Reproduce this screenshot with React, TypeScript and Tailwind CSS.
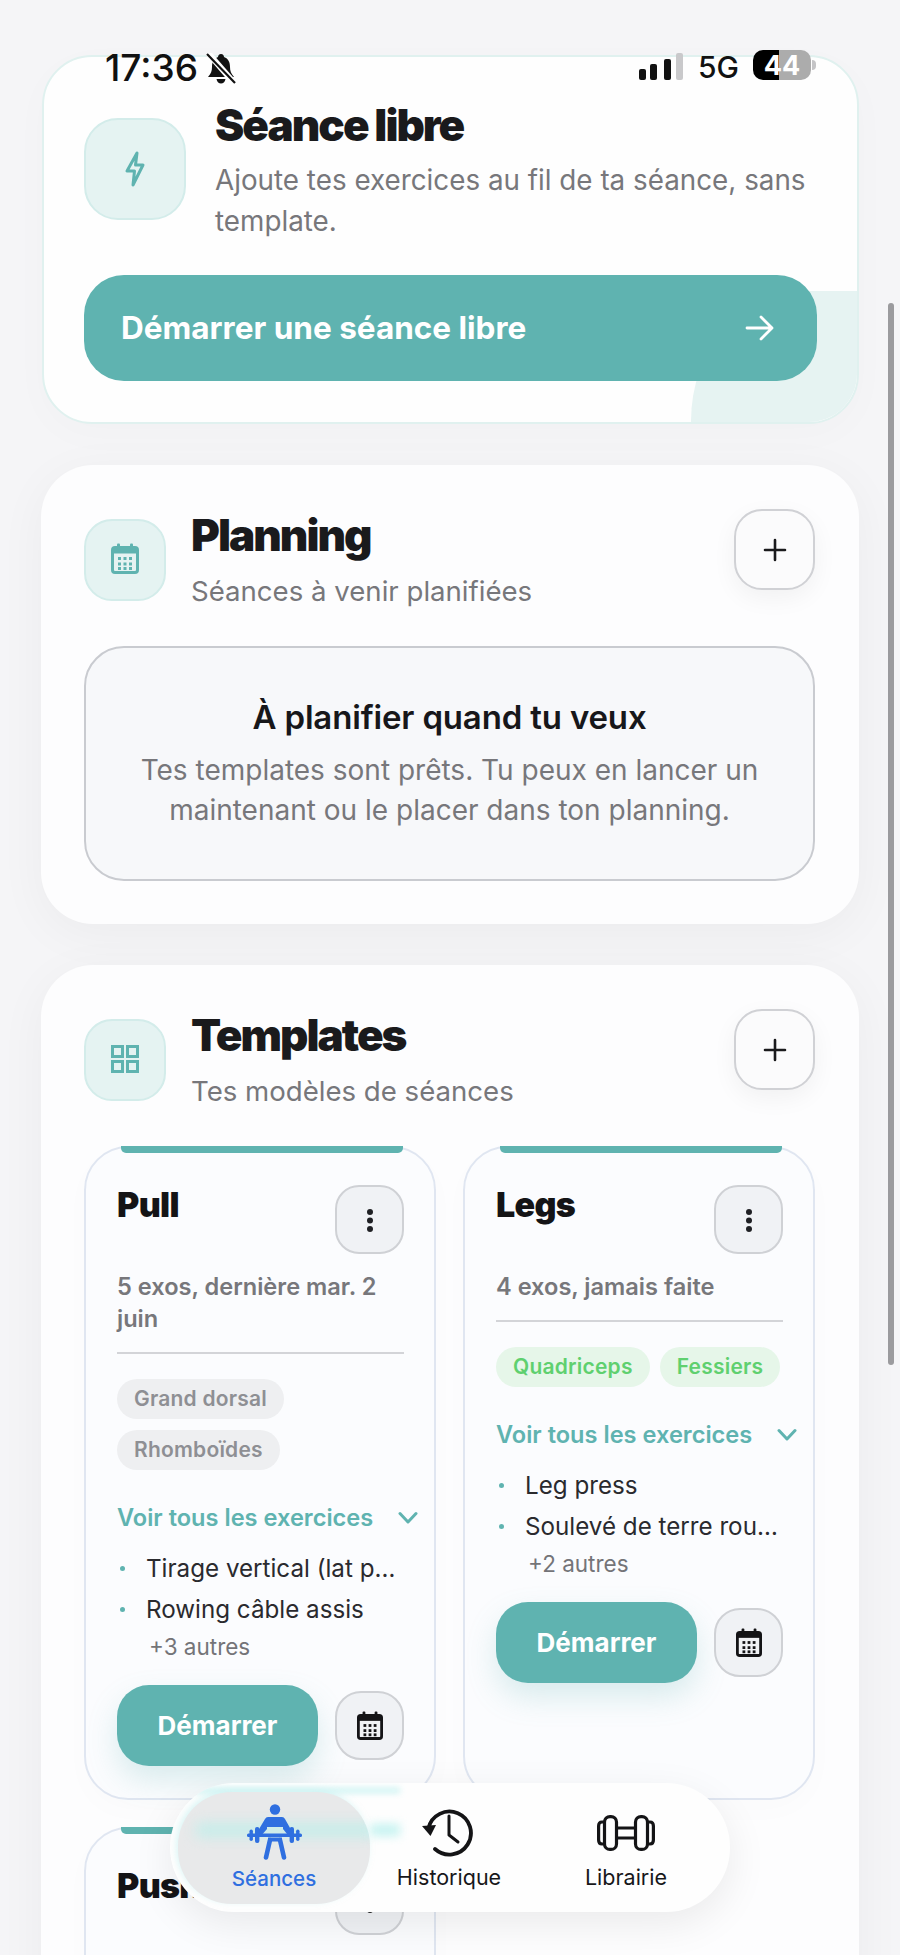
import React from "react";

function Bolt() {
  return (
    <svg width="22" height="38" viewBox="0 0 22 38" fill="none" stroke="#5fb3b0" strokeWidth="3" strokeLinejoin="round">
      <path d="M13 3 L3 21 H10.5 L9 35 L19 15 H11.5 Z" />
    </svg>
  );
}

function Cal({ color, w, h }: { color: string; w: number; h: number }) {
  return (
    <svg width={w} height={h} viewBox="0 0 28 31" fill="none">
      <rect x="1.5" y="4.5" width="25" height="25" rx="2.5" stroke={color} strokeWidth="3" />
      <rect x="1.5" y="5" width="25" height="5.5" fill={color} />
      <rect x="6" y="0.5" width="3" height="6" rx="1" fill={color} />
      <rect x="19" y="0.5" width="3" height="6" rx="1" fill={color} />
      {[7, 12.5, 18].map((x) =>
        [14, 19.5, 24].map((y) => <rect key={`${x}-${y}`} x={x} y={y} width="3" height="3" fill={color} />)
      )}
    </svg>
  );
}

function GridIcon() {
  return (
    <svg width="28" height="28" viewBox="0 0 28 28" fill="none" stroke="#5fb3b0" strokeWidth="3">
      <rect x="1.5" y="1.5" width="10" height="10" />
      <rect x="16.5" y="1.5" width="10" height="10" />
      <rect x="1.5" y="16.5" width="10" height="10" />
      <rect x="16.5" y="16.5" width="10" height="10" />
    </svg>
  );
}

function Plus() {
  return (
    <svg width="24" height="24" viewBox="0 0 24 24" stroke="#1a1a1c" strokeWidth="2.6" strokeLinecap="round">
      <path d="M12 2 V22 M2 12 H22" />
    </svg>
  );
}

function Dots() {
  return (
    <svg width="8" height="24" viewBox="0 0 8 24" fill="#1f2024">
      <circle cx="4" cy="4" r="3" />
      <circle cx="4" cy="12.5" r="3" />
      <circle cx="4" cy="21" r="3" />
    </svg>
  );
}

function Chevron() {
  return (
    <svg width="20" height="14" viewBox="0 0 20 14" fill="none" stroke="#5fb3b0" strokeWidth="3" strokeLinecap="round" strokeLinejoin="round" className="shrink-0">
      <path d="M2 2.5 L10 11 L18 2.5" />
    </svg>
  );
}

function Arrow() {
  return (
    <svg width="30" height="26" viewBox="0 0 30 26" fill="none" stroke="#ffffff" strokeWidth="2.8" strokeLinecap="round" strokeLinejoin="round">
      <path d="M2 13 H27 M16 2 L27 13 L16 24" />
    </svg>
  );
}

function BellOff() {
  return (
    <svg width="30" height="31" viewBox="0 0 30 31" fill="none">
      <path d="M15 1 C17 1 18 2.5 18 4 C22.5 5.5 24 9.5 24 14 C24 18 25 20.5 28 24 H2 C5 20.5 6 18 6 14 C6 9.5 7.5 5.5 12 4 C12 2.5 13 1 15 1 Z" fill="#111" />
      <path d="M10.5 26 H19.5 C19 29 17 30.5 15 30.5 C13 30.5 11 29 10.5 26 Z" fill="#111" />
      <path d="M2 0 L29 31" stroke="#fff" strokeWidth="6" />
      <path d="M1 1 L29 30" stroke="#111" strokeWidth="2.2" />
    </svg>
  );
}

function Lifter() {
  return (
    <svg width="55" height="56" viewBox="0 0 55 56" fill="#2f6fe0">
      <circle cx="28" cy="5.5" r="5.2" />
      <path d="M21 13 H35 Q37 13 38 15 L47 31 L42.5 33 L36 25 V23 H20 V25 L13 33 L8.5 31 L18 15 Q19 13 21 13 Z" />
      <rect x="0" y="29.5" width="55" height="3.4" rx="1.5" />
      <rect x="2.5" y="25.5" width="3.4" height="11.5" rx="1.7" />
      <rect x="8" y="23" width="4.4" height="16" rx="2" />
      <rect x="49.1" y="25.5" width="3.4" height="11.5" rx="1.7" />
      <rect x="42.6" y="23" width="4.4" height="16" rx="2" />
      <rect x="21" y="33.5" width="14" height="4" />
      <path d="M23 36 L19 53.5 M33 36 L37 53.5" fill="none" stroke="#2f6fe0" strokeWidth="4.6" strokeLinecap="round" />
    </svg>
  );
}

function HistoryIcon() {
  return (
    <svg width="54" height="48" viewBox="0 0 54 48" fill="none" stroke="#141416" strokeWidth="3.8" strokeLinecap="round" strokeLinejoin="round">
      <path d="M6.5 19 A21.5 21.5 0 1 1 13 40" />
      <path d="M27 7 V26 L36 33" strokeWidth="3" />
      <path d="M0 17 L14 16 L8.5 27 Z" fill="#141416" stroke="none" />
    </svg>
  );
}

function DumbbellIcon() {
  return (
    <svg width="58" height="36" viewBox="0 0 58 36" fill="none" stroke="#141416" strokeWidth="3.2" strokeLinejoin="round">
      <rect x="7.5" y="1.6" width="12" height="32.8" rx="5.5" />
      <rect x="38.5" y="1.6" width="12" height="32.8" rx="5.5" />
      <path d="M7.5 7 H5 Q1.6 7 1.6 11 V25 Q1.6 29 5 29 H7.5" />
      <path d="M50.5 7 H53 Q56.4 7 56.4 11 V25 Q56.4 29 53 29 H50.5" />
      <path d="M19.5 13 H38.5 M19.5 23 H38.5" />
    </svg>
  );
}

function SectionHead({
  icon,
  title,
  sub,
}: {
  icon: React.ReactNode;
  title: string;
  sub: string;
}) {
  return (
    <div className="flex items-start justify-between">
      <div className="flex items-center gap-[25px] h-[100px]">
        <div className="w-[82px] h-[82px] rounded-[28px] bg-[#e5f3f2] border-2 border-[#d3ecea] flex items-center justify-center pb-[3px]">
          {icon}
        </div>
        <div>
          <div className="h-[50px] leading-[50px] text-[44px] font-black tracking-[-0.045em] text-[#1a1a1c]">{title}</div>
          <div className="mt-[11px] h-[40px] leading-[40px] text-[27.6px] text-[#77777b]">{sub}</div>
        </div>
      </div>
      <div className="-mt-[1px] w-[81px] h-[81px] rounded-[28px] bg-[#fbfbfc] border-2 border-[#d0d1d5] shadow-[0_8px_24px_rgba(0,0,0,0.05)] flex items-center justify-center">
        <Plus />
      </div>
    </div>
  );
}

function CardHead({ title }: { title: string }) {
  return (
    <div className="flex items-start justify-between">
      <div className="h-[40px] leading-[40px] text-[34px] font-black tracking-[-0.02em] text-[#141416]">{title}</div>
      <div className="w-[69px] h-[69px] rounded-[24px] bg-[#f0f2f5] border-2 border-[#cfd1d5] flex items-center justify-center">
        <Dots />
      </div>
    </div>
  );
}

const cardClass =
  "relative rounded-[44px] bg-[#fbfcfe] border-2 border-[#e0e6f1] pl-[31px] pr-[30px] pt-[37px] shadow-[0_10px_30px_rgba(0,0,0,0.015)]";

function TopBar() {
  return <div className="absolute -top-[2px] left-[35px] w-[282px] h-[7px] rounded-b-[5px] bg-[#5fb3b0]" />;
}

function TemplateCard({
  title,
  meta,
  chips,
  green,
  items,
  more,
}: {
  title: string;
  meta: string;
  chips: string[];
  green?: boolean;
  items: string[];
  more: string;
}) {
  return (
    <div className={`${cardClass} pb-[32px]`}>
      <TopBar />
      <CardHead title={title} />
      <div className="mt-[17px] pb-[17px] border-b-2 border-[#d3d4d8] text-[23.6px] leading-[32px] font-semibold text-[#77777b]">{meta}</div>
      <div className="mt-[25px] flex flex-wrap gap-x-[10px] gap-y-[11px]">
        {chips.map((c) => (
          <span
            key={c}
            className={
              green
                ? "h-[40px] leading-[40px] px-[17px] rounded-full bg-[#e6f6e9] text-[#5fd06f] text-[21px] font-semibold tracking-[0.01em]"
                : "h-[40px] leading-[40px] px-[17px] rounded-full bg-[#eeeff1] text-[#8e8f94] text-[21px] font-semibold tracking-[0.01em]"
            }
          >
            {c}
          </span>
        ))}
      </div>
      <div className="mt-[33px] h-[30px] flex items-center gap-[25px] whitespace-nowrap">
        <span className="text-[23.6px] leading-[30px] font-semibold text-[#5fb3b0]">Voir tous les exercices</span>
        <Chevron />
      </div>
      <div className="mt-[15px]">
        {items.map((it) => (
          <div key={it} className="h-[41px] flex items-center">
            <span className="w-[5px] h-[5px] rounded-full bg-[#5fb3b0] ml-[3px] mr-[21px] shrink-0" />
            <span className="text-[24.2px] leading-[41px] text-[#2a2a2e] whitespace-nowrap">{it}</span>
          </div>
        ))}
      </div>
      <div className="mt-[3px] ml-[32px] h-[28px] leading-[28px] text-[22.5px] text-[#747478]">{more}</div>
      <div className="mt-[24px] flex items-center gap-[17px]">
        <div className="w-[201px] h-[81px] rounded-[32px] bg-[#5fb3b0] shadow-[0_14px_30px_rgba(95,179,176,0.22)] flex items-center justify-center text-white text-[26px] font-bold">
          Démarrer
        </div>
        <div className="w-[69px] h-[69px] rounded-[26px] bg-[#f0f2f5] border-2 border-[#cfd1d5] flex items-center justify-center">
          <Cal color="#141416" w={26} h={29} />
        </div>
      </div>
    </div>
  );
}

export default function App() {
  return (
    <div
      className="relative w-[900px] h-[1955px] overflow-hidden bg-[#f5f5f7] text-[#1a1a1c]"
      style={{ fontFamily: "Inter, 'Noto Sans', sans-serif" }}
    >
      <div className="pt-[55px] pl-[41px] w-[860px] flex flex-col gap-[41px]">
        {/* Séance libre */}
        <div className="relative ml-[1px] w-[817px] h-[369px] rounded-[50px] bg-[#fefefe] border-2 border-[#e0f1ef] overflow-hidden shadow-[0_10px_40px_rgba(0,0,0,0.02)] pt-[43px] pl-[40px] pr-[40px]">
          <div className="absolute right-0 bottom-0 w-[166px] h-[131px] rounded-tl-[110px_130px] bg-[#e6f3f2]" />
          <div className="relative flex items-center gap-[29px] h-[141px]">
            <div className="-mt-[3px] w-[102px] h-[102px] shrink-0 rounded-[34px] bg-[#e5f3f2] border-2 border-[#d3ecea] flex items-center justify-center">
              <Bolt />
            </div>
            <div>
              <div className="h-[50px] leading-[50px] text-[44px] font-black tracking-[-0.045em] text-[#1a1a1c]">Séance libre</div>
              <div className="mt-[10px] text-[27.8px] leading-[41px] text-[#77777b]">
                Ajoute tes exercices au fil de ta séance, sans template.
              </div>
            </div>
          </div>
          <div className="relative mt-[34px] h-[106px] rounded-[40px] bg-[#5fb3b0] flex items-center justify-between pl-[37px] pr-[42px]">
            <span className="text-white text-[31.5px] font-bold">Démarrer une séance libre</span>
            <Arrow />
          </div>
        </div>

        {/* Planning */}
        <div className="w-[818px] h-[459px] rounded-[52px] bg-[#fdfdfe] shadow-[0_10px_50px_rgba(0,0,0,0.045)] pt-[45px] pl-[43px] pr-[44px]">
          <SectionHead icon={<Cal color="#5fb3b0" w={28} h={31} />} title="Planning" sub="Séances à venir planifiées" />
          <div className="mt-[36px] h-[235px] rounded-[40px] bg-[#f7f8fa] border-2 border-[#c9cbd0] pt-[47px] flex flex-col items-center">
            <div className="h-[44px] leading-[44px] text-[33px] font-semibold tracking-[-0.005em] text-[#17171a]">À planifier quand tu veux</div>
            <div className="mt-[11px] text-center w-[650px] text-[28px] leading-[40px] text-[#77777b]">
              Tes templates sont prêts. Tu peux en lancer un maintenant ou le placer dans ton planning.
            </div>
          </div>
        </div>

        {/* Templates */}
        <div className="w-[818px] h-[1100px] rounded-[52px] bg-[#fdfdfe] shadow-[0_10px_50px_rgba(0,0,0,0.045)] pt-[45px] pl-[43px] pr-[44px]">
          <SectionHead icon={<GridIcon />} title="Templates" sub="Tes modèles de séances" />
          <div className="mt-[36px] w-[731px] grid grid-cols-2 gap-x-[27px] gap-y-[27px]">
            <TemplateCard
              title="Pull"
              meta="5 exos, dernière mar. 2 juin"
              chips={["Grand dorsal", "Rhomboïdes"]}
              items={["Tirage vertical (lat p…", "Rowing câble assis"]}
              more="+3 autres"
            />
            <TemplateCard
              title="Legs"
              meta="4 exos, jamais faite"
              chips={["Quadriceps", "Fessiers"]}
              green
              items={["Leg press", "Soulevé de terre rou…"]}
              more="+2 autres"
            />
            <div className={`${cardClass} h-[300px]`}>
              <TopBar />
              <CardHead title="Push" />
            </div>
          </div>
        </div>
      </div>

      {/* Scrollbar */}
      <div className="absolute left-[888px] top-[303px] w-[6px] h-[1062px] rounded-full bg-[#9b9b9e]" />

      {/* Status bar */}
      <div className="absolute left-[105px] top-[46px] h-[42px] flex items-center text-[#111] text-[37px] font-medium leading-none">
        17:36
        <span className="ml-[8px] mt-[2px] flex">
          <BellOff />
        </span>
      </div>
      <div className="absolute left-[639px] top-[50px] h-[30px] flex items-end">
        <span className="w-[7px] h-[11px] rounded-[2px] bg-[#111]" />
        <span className="ml-[4px] w-[7px] h-[16px] rounded-[2px] bg-[#111]" />
        <span className="ml-[7px] w-[7px] h-[21px] rounded-[2px] bg-[#111]" />
        <span className="ml-[5px] w-[7px] h-[27px] rounded-[2px] bg-[#c9c9cb]" />
      </div>
      <div className="absolute left-[698px] top-[46px] h-[42px] leading-[42px] text-[30px] font-medium text-[#111]">5G</div>
      <div className="absolute left-[753px] top-[50px] w-[58px] h-[30px] rounded-[10px] overflow-hidden flex">
        <div className="w-[26px] bg-black" />
        <div className="flex-1 bg-[#acacac]" />
        <div className="absolute inset-0 flex items-center justify-center text-white text-[27px] font-bold leading-none">44</div>
      </div>
      <div className="absolute left-[812px] top-[60px] w-[4px] h-[10px] rounded-r-full bg-[#c4c4c6]" />

      {/* Bottom nav */}
      <div className="absolute left-[170px] top-[1783px] w-[560px] h-[129px] rounded-[64px] bg-[#fefefe] shadow-[0_12px_40px_rgba(0,0,0,0.08)] overflow-hidden flex pl-[8px] pt-[9px]">
        <div className="absolute left-[24px] top-[5px] w-[206px] h-[5px] bg-[#c8f3f2] blur-[3px]" />
        <div className="relative w-[192px] h-[112px] rounded-[54px] bg-[#e8e9ea] shadow-[-2px_-2px_6px_rgba(190,240,240,0.5)] flex flex-col items-center pt-[12px] overflow-hidden">
          <div className="absolute left-[18px] top-[32px] w-[180px] h-[12px] bg-[#bfeeea] blur-[7px]" />
          <span className="relative flex">
            <Lifter />
          </span>
          <span className="relative mt-[7px] text-[20.5px] leading-[24px] font-medium text-[#2f6fe0]">Séances</span>
        </div>
        <div className="absolute left-[200px] top-[41px] w-[30px] h-[12px] bg-[#c6f3f1] blur-[5px]" />
        <div className="relative w-[158px] flex flex-col items-center pt-[17px]">
          <span className="flex h-[48px]">
            <HistoryIcon />
          </span>
          <span className="mt-[8px] text-[21.5px] leading-[24px] font-normal text-[#17171a]">Historique</span>
        </div>
        <div className="relative w-[196px] flex flex-col items-center pt-[23px]">
          <span className="flex h-[41px]">
            <DumbbellIcon />
          </span>
          <span className="mt-[9px] text-[21.5px] leading-[24px] font-normal text-[#17171a]">Librairie</span>
        </div>
      </div>
    </div>
  );
}
